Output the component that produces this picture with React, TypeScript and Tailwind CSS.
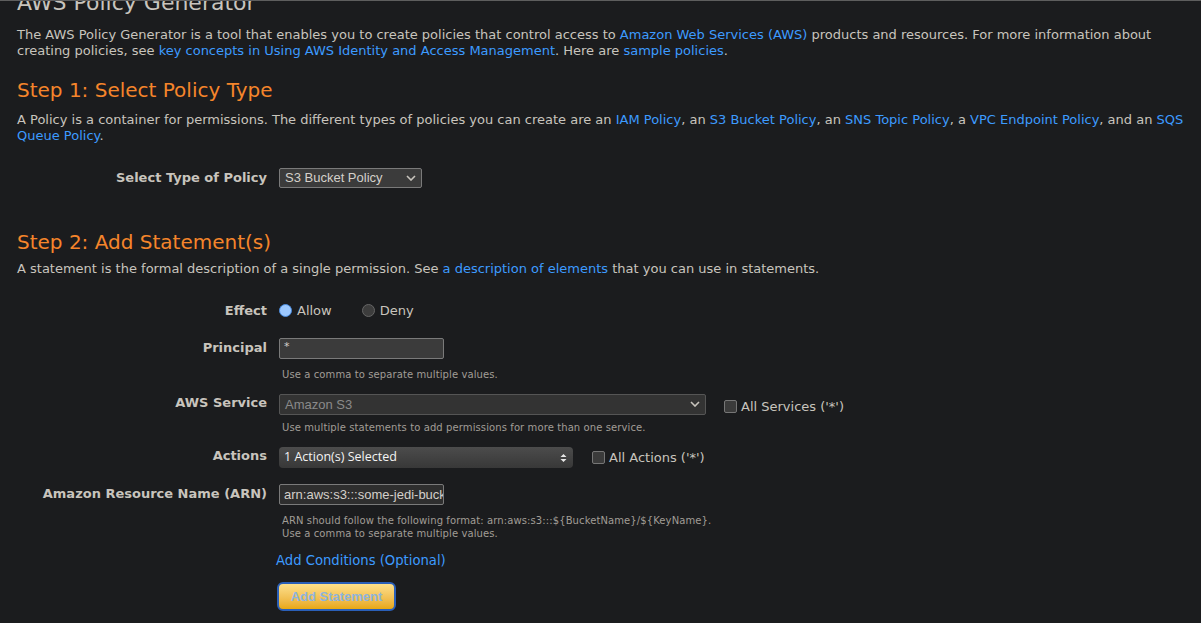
import React from "react";

const body = "font-['DejaVu_Sans',Verdana,sans-serif]";
const arial = "font-['Liberation_Sans',Arial,sans-serif]";

const A: React.FC<{ children: React.ReactNode }> = ({ children }) => (
  <a href="#" className="text-[#3d9bff] hover:underline">
    {children}
  </a>
);

const Row: React.FC<{ label: string; className?: string; labelClass?: string; children: React.ReactNode }> = ({
  label,
  className = "",
  labelClass = "",
  children,
}) => (
  <div className={`flex ${className}`}>
    <div className={`w-[250px] shrink-0 text-right font-bold text-[13px] text-[#c8c4bd] ${labelClass}`}>{label}</div>
    <div className="ml-[12px] flex-1">{children}</div>
  </div>
);

const Hint: React.FC<{ children: React.ReactNode }> = ({ children }) => (
  <div className="text-[10px] leading-[13px] text-[#a19d96] pl-[3px] tracking-[0.1px]">{children}</div>
);

const Chevron = () => (
  <svg width="10" height="6" viewBox="0 0 10 6" className="text-[#c8c4bd]">
    <path d="M1 1l4 4 4-4" fill="none" stroke="currentColor" strokeWidth="1.6" />
  </svg>
);

const Check: React.FC<{ label: string }> = ({ label }) => (
  <label className="flex items-center gap-[4px] text-[13px] text-[#c8c4bd]">
    <span className="w-[13px] h-[13px] rounded-[2px] border border-[#767676] bg-[#3b3b3b]" />
    {label}
  </label>
);

export default function App() {
  return (
    <div className={`min-h-[623px] bg-[#1b1c1e] border-t border-[#5e5e5e] ${body} text-[#c8c4bd] px-[17px] overflow-hidden`}>
      <h1 className="text-[22px] leading-[24px] mt-[-10px] text-[#c8c4bd]">AWS Policy Generator</h1>
      <p className="mt-[12px] text-[13px] leading-[16px]">
        The AWS Policy Generator is a tool that enables you to create policies that control access to{" "}
        <A>Amazon Web Services (AWS)</A> products and resources. For more information about creating policies, see{" "}
        <A>key concepts in Using AWS Identity and Access Management</A>. Here are <A>sample policies</A>.
      </p>

      <h2 className="mt-[19px] text-[20px] leading-[24px] text-[#f5852b]">Step 1: Select Policy Type</h2>
      <p className="mt-[10px] text-[13px] leading-[16px]">
        A Policy is a container for permissions. The different types of policies you can create are an{" "}
        <A>IAM Policy</A>, an <A>S3 Bucket Policy</A>, an <A>SNS Topic Policy</A>, a <A>VPC Endpoint Policy</A>, and an{" "}
        <A>SQS Queue Policy</A>.
      </p>

      <Row label="Select Type of Policy" className="mt-[24px] items-center">
        <div className={`w-[143px] h-[20px] border border-[#7a7a7a] bg-[#3b3b3b] rounded-[2px] flex items-center justify-between pl-[5px] pr-[5px] ${arial} text-[13px] text-[#d4d0ca]`}>
          S3 Bucket Policy <Chevron />
        </div>
      </Row>

      <h2 className="mt-[42px] text-[20px] leading-[24px] text-[#f5852b]">Step 2: Add Statement(s)</h2>
      <p className="mt-[7px] text-[13px] leading-[16px]">
        A statement is the formal description of a single permission. See <A>a description of elements</A> that you can
        use in statements.
      </p>

      <Row label="Effect" className="mt-[24px] items-center">
        <div className="flex items-center text-[13px]">
          <span className="w-[13px] h-[13px] rounded-full border border-[#4a8ce0] bg-[#9cc8ff]" />
          <span className="ml-[5px]">Allow</span>
          <span className="w-[13px] h-[13px] rounded-full border border-[#666] bg-[#3d3d3d] ml-[30px]" />
          <span className="ml-[5px]">Deny</span>
        </div>
      </Row>

      <Row label="Principal" className="mt-[17px] items-start" labelClass="leading-[19px]">
        <div className="w-[165px] h-[21px] border border-[#7a7a7a] bg-[#3b3b3b] rounded-[2px] text-[11px] pl-[4px] text-[#d4d0ca]">*</div>
        <div className="mt-[9px]">
          <Hint>Use a comma to separate multiple values.</Hint>
        </div>
      </Row>

      <Row label="AWS Service" className="mt-[12px] items-start" labelClass="leading-[19px]">
        <div className="flex items-center">
          <div className={`w-[427px] h-[21px] border border-[#555] bg-[#333333] rounded-[2px] flex items-center justify-between pl-[5px] pr-[5px] ${arial} text-[13px] text-[#8a8a8a]`}>
            Amazon S3 <Chevron />
          </div>
          <div className="ml-[18px] mt-[4px]">
            <Check label="All Services ('*')" />
          </div>
        </div>
        <div className="mt-[5px]">
          <Hint>Use multiple statements to add permissions for more than one service.</Hint>
        </div>
      </Row>

      <Row label="Actions" className="mt-[13px] items-start" labelClass="leading-[17px]">
        <div className="flex items-center">
          <div className="w-[294px] h-[21px] rounded-[4px] bg-gradient-to-b from-[#4c4c4c] to-[#383838] flex items-center justify-between pl-[5px] pr-[6px] text-[12.5px] text-[#f4f4f4] font-['Open_Sans',Tahoma,sans-serif]">
            1 Action(s) Selected
            <svg width="7" height="10" viewBox="0 0 7 10">
              <path d="M3.5 1L6.5 4H0.5Z M3.5 9L6.5 6H0.5Z" fill="#e6e6e6" />
            </svg>
          </div>
          <div className="ml-[19px]">
            <Check label="All Actions ('*')" />
          </div>
        </div>
      </Row>

      <Row label="Amazon Resource Name (ARN)" className="mt-[16px] items-start" labelClass="leading-[19px]">
        <div className={`w-[165px] h-[21px] border border-[#7a7a7a] bg-[#2e2e2e] rounded-[2px] overflow-hidden whitespace-nowrap pl-[4px] ${arial} text-[13px] leading-[19px] text-[#d4d0ca]`}>
          arn:aws:s3:::some-jedi-bucket/*
        </div>
        <div className="mt-[9px]">
          <Hint>ARN should follow the following format: arn:aws:s3:::${"{BucketName}"}/${"{KeyName}"}.</Hint>
          <Hint>Use a comma to separate multiple values.</Hint>
        </div>
        <div className="mt-[11px] ml-[-3px] text-[13.2px]">
          <A>Add Conditions (Optional)</A>
        </div>
        <button
          className={`mt-[11px] ml-[-2px] w-[119px] h-[29px] rounded-[6px] border-2 border-[#2a5fb8] bg-gradient-to-b from-[#fde08a] to-[#e8a80c] ${arial} font-bold text-[13px] text-[#8db4de]`}
        >
          Add Statement
        </button>
      </Row>
    </div>
  );
}
